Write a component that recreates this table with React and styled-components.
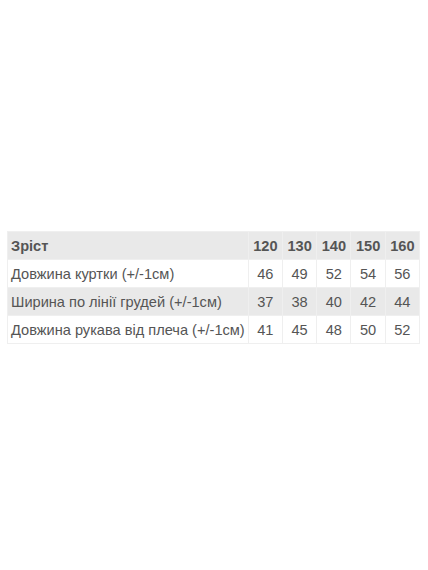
import React from 'react';
import styled, { createGlobalStyle } from 'styled-components';

const GlobalStyle = createGlobalStyle`
  html, body {
    margin: 0;
    padding: 0;
    background: #ffffff;
  }
`;

const sizes = [120, 130, 140, 150, 160];

const rows = [
  { label: 'Довжина куртки (+/-1см)', values: [46, 49, 52, 54, 56] },
  { label: 'Ширина по лінії грудей (+/-1см)', values: [37, 38, 40, 42, 44] },
  { label: 'Довжина рукава від плеча (+/-1см)', values: [41, 45, 48, 50, 52] },
];

const App = () => {
  return (
    <Page>
      <GlobalStyle />
      <SizeTable>
        <tbody>
          <Row $shaded>
            <LabelCell $bold>Зріст</LabelCell>
            {sizes.map(s => (
              <ValueCell key={s} $bold>{s}</ValueCell>
            ))}
          </Row>
          {rows.map((row, i) => (
            <Row key={row.label} $shaded={i % 2 === 1}>
              <LabelCell>{row.label}</LabelCell>
              {row.values.map((v, j) => (
                <ValueCell key={j}>{v}</ValueCell>
              ))}
            </Row>
          ))}
        </tbody>
      </SizeTable>
    </Page>
  );
};

const Page = styled.div`
  width: 428px;
  height: 570px;
  padding: 231px 8px 0 7px;
  box-sizing: border-box;
  font-family: 'Liberation Sans', Arial, sans-serif;
`;

const SizeTable = styled.table`
  width: 413px;
  border-collapse: collapse;
  border: 1px solid #f0f0f0;
`;

const Row = styled.tr`
  height: 28px;
  background: ${props => (props.$shaded ? '#e9e9e9' : '#ffffff')};
`;

const LabelCell = styled.td`
  padding: 0 3px;
  font-size: 14.6px;
  color: #555555;
  font-weight: ${props => (props.$bold ? 700 : 400)};
  text-align: left;
  white-space: nowrap;
  border: 1px solid #efefef;
`;

const ValueCell = styled.td`
  width: 34px;
  padding: 0;
  font-size: 14.6px;
  color: #555555;
  font-weight: ${props => (props.$bold ? 700 : 400)};
  text-align: center;
  border: 1px solid #efefef;
`;

export default App;
